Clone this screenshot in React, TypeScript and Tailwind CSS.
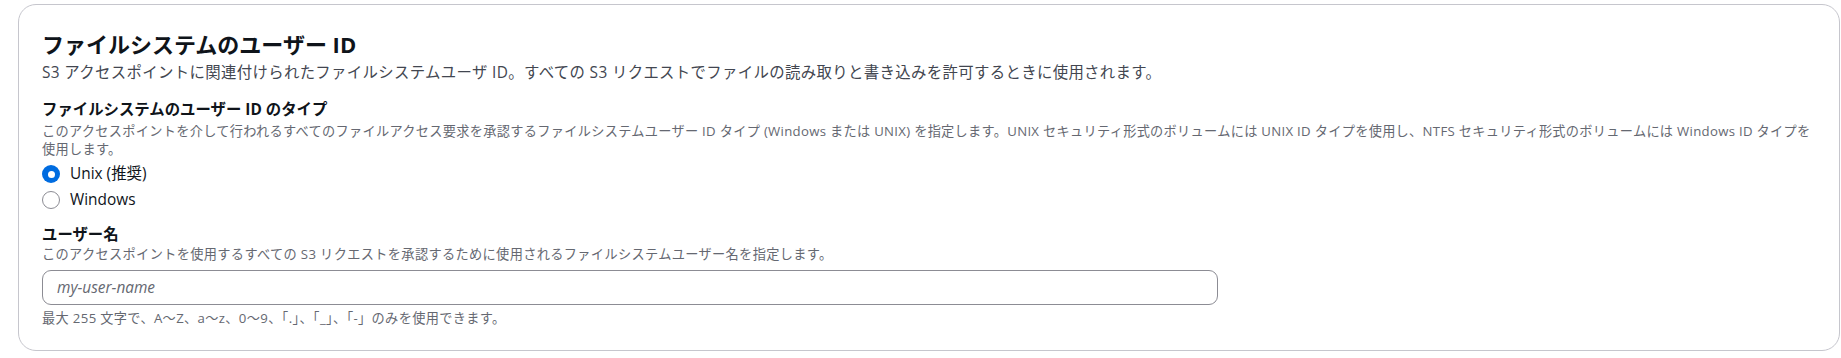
import React, { useState } from 'react';

const FONT = { fontFamily: '"Open Sans", "Noto Sans CJK JP", sans-serif' };

const Radio = ({ checked, label, onClick }: { checked: boolean; label: string; onClick: () => void }) => (
    <button type="button" onClick={onClick} className="flex items-center gap-[10px] h-[22px] text-left">
        {checked ? (
            <span className="w-[18px] h-[18px] rounded-full bg-[#006ce0] flex items-center justify-center">
                <span className="w-[7px] h-[7px] rounded-full bg-white" />
            </span>
        ) : (
            <span className="w-[18px] h-[18px] rounded-full border border-[#8c8c94] bg-white" />
        )}
        <span className="text-[15.4px] leading-[22px] text-[#0f141a]">{label}</span>
    </button>
);

export default function App() {
    const [idType, setIdType] = useState('unix');
    const [userName, setUserName] = useState('');

    return (
        <div className="w-[1841px] h-[358px] bg-white pl-[18px] pr-px pt-[4px]" style={FONT}>
            <div className="border border-[#c6c6cd] rounded-[18px] bg-white pl-[23px] pr-[23px] pt-[26px] pb-[23px]">
                <h2 className="text-[22px] leading-[26px] font-bold text-[#0f141a]">ファイルシステムのユーザー ID</h2>
                <p className="mt-[5px] text-[15.4px] leading-[22px] tracking-[0.35px] text-[#424650]">
                    S3 アクセスポイントに関連付けられたファイルシステムユーザ ID。すべての S3 リクエストでファイルの読み取りと書き込みを許可するときに使用されます。
                </p>

                <div className="mt-[15px]">
                    <label className="block text-[15.4px] leading-[22px] font-bold text-[#0f141a]">ファイルシステムのユーザー ID のタイプ</label>
                    <p className="mt-[2px] text-[13.2px] leading-[17.6px] tracking-[0.3px] text-[#656871]">
                        このアクセスポイントを介して行われるすべてのファイルアクセス要求を承認するファイルシステムユーザー ID タイプ (Windows または UNIX) を指定します。UNIX セキュリティ形式のボリュームには UNIX ID タイプを使用し、NTFS セキュリティ形式のボリュームには Windows ID タイプを使用します。
                    </p>
                    <div className="mt-[5px] flex flex-col gap-[4px]">
                        <Radio checked={idType === 'unix'} label="Unix (推奨)" onClick={() => setIdType('unix')} />
                        <Radio checked={idType === 'windows'} label="Windows" onClick={() => setIdType('windows')} />
                    </div>
                </div>

                <div className="mt-[13px]">
                    <label className="block text-[15.4px] leading-[22px] font-bold text-[#0f141a]">ユーザー名</label>
                    <p className="text-[13.2px] leading-[17.6px] tracking-[0.35px] text-[#656871]">
                        このアクセスポイントを使用するすべての S3 リクエストを承認するために使用されるファイルシステムユーザー名を指定します。
                    </p>
                    <input
                        value={userName}
                        onChange={(e) => setUserName(e.target.value)}
                        placeholder="my-user-name"
                        className="mt-[6px] block w-[1176px] h-[35px] border border-[#8c8c94] rounded-[9px] px-[14px] text-[15.4px] text-[#0f141a] placeholder:italic placeholder:text-[#656871] outline-none"
                        style={FONT}
                    />
                    <p className="mt-[5px] text-[13.2px] leading-[17.6px] tracking-[0.35px] text-[#656871]">
                        最大 255 文字で、A～Z、a～z、0～9、「.」、「_」、「-」のみを使用できます。
                    </p>
                </div>
            </div>
        </div>
    );
}
